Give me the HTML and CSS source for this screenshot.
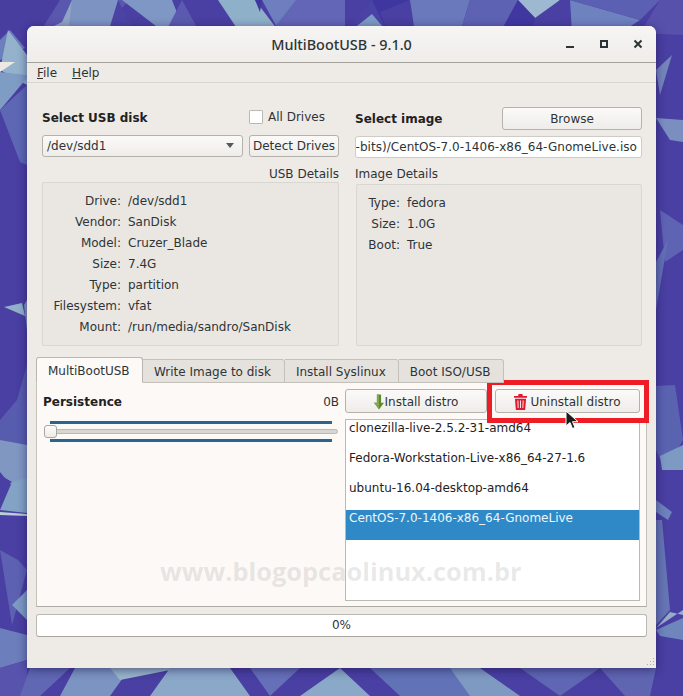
FILE: index.html
```html
<!DOCTYPE html>
<html lang="en">
<head>
<meta charset="utf-8">
<title>MultiBootUSB - 9.1.0</title>
<link rel="stylesheet" href="styles.css">
</head>
<body>
<div class="desktop">
  <svg class="wallpaper" width="683" height="696" viewBox="0 0 683 696" aria-hidden="true">
    <rect width="683" height="696" fill="#4a3fa2"/>
    <polygon points="0,0 60,0 45,30 0,35" fill="#483ea0"/>
    <polygon points="60,0 130,0 100,30 40,32" fill="#5a57ae"/>
    <polygon points="40,33 62,22 72,0 80,33" fill="#8fa3c6"/>
    <polygon points="68,33 72,0 118,0 122,33" fill="#7d94c2"/>
    <polygon points="108,33 118,0 135,33" fill="#4b44a5"/>
    <polygon points="122,0 172,0 185,33 165,33" fill="#7f97c4"/>
    <polygon points="165,33 182,0 200,33" fill="#5b5ab0"/>
    <polygon points="218,0 255,0 280,33 240,33" fill="#8fb0c9"/>
    <polygon points="255,0 262,0 260,12" fill="#3f36a0"/>
    <polygon points="262,0 298,0 280,33" fill="#6e7fbf"/>
    <polygon points="270,33 296,0 345,0 345,33" fill="#6366b6"/>
    <polygon points="345,33 372,0 388,33" fill="#4a43a6"/>
    <polygon points="372,0 410,0 380,12 388,33" fill="#4036a0"/>
    <polygon points="348,33 372,14 388,33" fill="#7d9cc4"/>
    <polygon points="410,0 470,0 460,33 415,33" fill="#6a78bc"/>
    <polygon points="470,0 518,0 500,33 460,33" fill="#5d62b3"/>
    <polygon points="518,0 560,0 535,18" fill="#9db8d0"/>
    <polygon points="518,0 535,18 530,33 500,33" fill="#4037a0"/>
    <polygon points="560,0 570,33 530,33 555,5" fill="#4a40a4"/>
    <polygon points="570,0 640,20 620,33 572,33" fill="#6f82c0"/>
    <polygon points="570,0 660,0 640,20" fill="#5c60b2"/>
    <polygon points="660,0 683,0 683,35 640,33" fill="#5751ac"/>
    <polygon points="0,40 10,30 25,48 0,60" fill="#6b7fbc"/>
    <polygon points="8,30 27,55 27,85 0,70" fill="#94b2cb"/>
    <polygon points="0,62 15,62 0,72" fill="#ece8e2"/>
    <polygon points="0,72 27,75 27,78 0,110" fill="#7e9cc4"/>
    <polygon points="0,110 27,85 27,165 20,162" fill="#5d67b3"/>
    <polygon points="27,365 17,400 0,420 0,440 27,460" fill="#585cae"/>
    <polygon points="0,440 27,445 27,480 10,484 0,472" fill="#8097c2"/>
    <polygon points="0,490 12,482 0,475" fill="#4a3fa2"/>
    <polygon points="0,510 12,482 27,478 27,513" fill="#82a3c4"/>
    <polygon points="0,512 27,514 27,516 0,515" fill="#b7cfd8"/>
    <polygon points="0,550 18,560 27,570 12,625" fill="#5d61b2"/>
    <polygon points="27,590 12,605 27,620" fill="#7d9ac2"/>
    <polygon points="0,628 27,635 27,660 0,668" fill="#6c7ebb"/>
    <polygon points="0,668 27,660 27,696 0,696" fill="#5854ae"/>
    <polygon points="4,307 22,303 25,316" fill="#91b0ca"/>
    <polygon points="27,300 24,305 27,330" fill="#7f99c2"/>
    <polygon points="30,668 70,668 40,696 20,696" fill="#6068b4"/>
    <polygon points="60,696 75,668 130,668 110,696" fill="#7c94c2"/>
    <polygon points="110,668 180,668 120,680" fill="#9ab6cc"/>
    <polygon points="150,696 170,668 230,668 250,696" fill="#8ba8c8"/>
    <polygon points="250,668 300,668 270,696" fill="#6670b8"/>
    <polygon points="300,696 340,668 370,696" fill="#8aa8c7"/>
    <polygon points="370,668 450,668 480,696 400,696" fill="#6272b6"/>
    <polygon points="450,668 480,668 520,696 470,696" fill="#7f9ac2"/>
    <polygon points="520,668 600,668 560,696" fill="#5f66b3"/>
    <polygon points="600,668 656,668 650,696 625,696" fill="#6065b2"/>
    <polygon points="656,70 672,55 660,95" fill="#7586bb"/>
    <polygon points="656,118 683,120 683,142 670,140" fill="#7a8fc0"/>
    <polygon points="660,210 683,225 683,250 665,262" fill="#5f63b3"/>
    <polygon points="656,262 668,240 656,310" fill="#6470b5"/>
    <polygon points="656,386 675,385 683,440 665,470 656,450" fill="#5a63b0"/>
    <polygon points="660,456 683,445 683,470 662,470" fill="#7d9bc2"/>
    <polygon points="656,500 672,512 668,520 656,512" fill="#6e82bc"/>
    <polygon points="656,520 662,520 670,610 656,625" fill="#6675b4"/>
    <polygon points="656,628 683,610 683,615 670,612" fill="#95aec8"/>
    <polygon points="656,630 683,618 683,640 660,636" fill="#6f86bd"/>
  </svg>

  <main class="window">
    <header class="titlebar">
      <h1 class="title">MultiBootUSB - 9.1.0</h1>
      <div class="controls">
        <svg width="14" height="14" viewBox="0 0 14 14"><rect x="3" y="9" width="8" height="2" fill="#2e3436"/></svg>
        <svg width="14" height="14" viewBox="0 0 14 14"><rect x="4" y="4" width="6" height="6" fill="none" stroke="#2e3436" stroke-width="2"/></svg>
        <svg width="14" height="14" viewBox="0 0 14 14"><path d="M3.500 3.500l7 7M10.500 3.500l-7 7" stroke="#2e3436" stroke-width="2" fill="none"/></svg>
      </div>
    </header>
    <nav class="menubar"><span><u>F</u>ile</span><span><u>H</u>elp</span></nav>

    <div class="content">
      <section class="upper">
        <div class="col col-left">
          <div class="row row-usb">
            <strong>Select USB disk</strong>
            <label class="check"><span class="checkbox"></span>All Drives</label>
          </div>
          <div class="row row-combo">
            <div class="combo"><span>/dev/sdd1</span><i class="caret"></i></div>
            <button class="btn btn-detect">Detect Drives</button>
          </div>
          <div class="caption caption-right">USB Details</div>
          <div class="panel panel-usb">
            <dl class="details">
              <dt>Drive:</dt><dd>/dev/sdd1</dd>
              <dt>Vendor:</dt><dd>SanDisk</dd>
              <dt>Model:</dt><dd>Cruzer_Blade</dd>
              <dt>Size:</dt><dd>7.4G</dd>
              <dt>Type:</dt><dd>partition</dd>
              <dt>Filesystem:</dt><dd>vfat</dd>
              <dt>Mount:</dt><dd>/run/media/sandro/SanDisk</dd>
            </dl>
          </div>
        </div>
        <div class="col col-right">
          <div class="row row-image">
            <strong>Select image</strong>
            <button class="btn btn-browse">Browse</button>
          </div>
          <div class="path"><span>(64-bits)/CentOS-7.0-1406-x86_64-GnomeLive.iso</span></div>
          <div class="caption caption-image">Image Details</div>
          <div class="panel panel-image">
            <dl class="details details-image">
              <dt>Type:</dt><dd>fedora</dd>
              <dt>Size:</dt><dd>1.0G</dd>
              <dt>Boot:</dt><dd>True</dd>
            </dl>
          </div>
        </div>
      </section>

      <section class="tabs">
        <div class="tabbar">
          <div class="tab tab-active">MultiBootUSB</div>
          <div class="tab">Write Image to disk</div>
          <div class="tab tab-narrow">Install Syslinux</div>
          <div class="tab tab-narrow">Boot ISO/USB</div>
        </div>
        <div class="pane">
          <div class="pane-left">
            <div class="persist"><strong>Persistence</strong><span>0B</span></div>
            <div class="slider">
              <div class="tick"></div>
              <div class="groove"><span class="thumb"></span></div>
              <div class="tick"></div>
            </div>
          </div>
          <div class="pane-right">
            <div class="actions">
              <button class="btn btn-action btn-install">
                <svg width="10" height="18" viewBox="0 0 12 20"><path d="M3.500 1h5v10H12l-6 8-6-8h3.500z" fill="#5d8a2d"/><path d="M3.500 1h2.500v17L0 11h3.500z" fill="#7fa84a"/></svg>
                <span>Install distro</span>
              </button>
              <button class="btn btn-action btn-uninstall">
                <svg width="13" height="16" viewBox="0 0 14 17"><path d="M5 0h4l.6 2H14v2H0V2h4.400z" fill="#e3172d"/><path d="M1 5h12l-1 12H2zM3.600 7l.4 8h1l-.3-8zm2.900 0v8h1V7zm2.900 0L9 15h1l.4-8z" fill="#e3172d" fill-rule="evenodd"/></svg>
                <span>Uninstall distro</span>
              </button>
            </div>
            <ul class="distros">
              <li>clonezilla-live-2.5.2-31-amd64</li>
              <li>Fedora-Workstation-Live-x86_64-27-1.6</li>
              <li>ubuntu-16.04-desktop-amd64</li>
              <li class="selected">CentOS-7.0-1406-x86_64-GnomeLive</li>
            </ul>
          </div>
        </div>
      </section>

      <div class="progress">0%</div>
    </div>
    <svg class="grip" width="10" height="10" viewBox="0 0 10 10"><path d="M8 1h1v1H8zM5 4h1v1H5zM8 4h1v1H8zM2 7h1v1H2zM5 7h1v1H5zM8 7h1v1H8z" fill="#b0aca6"/></svg>
  </main>

  <div class="watermark">www.blogopcaolinux.com.br</div>
  <div class="highlight"></div>
  <svg class="cursor" width="14" height="21" viewBox="0 0 14 21"><path d="M1 1v15l4-3.500 2.500 6 2.500-1-2.500-5.800H13z" fill="#1c1c1c" stroke="#fff" stroke-width="1"/></svg>
</div>
</body>
</html>
```

FILE: styles.css
```css
* { box-sizing: border-box; }
html, body { margin: 0; padding: 0; }
body { font-family: "DejaVu Sans", sans-serif; font-size: 12px; color: #2e3436; }
.desktop { position: relative; width: 683px; height: 696px; overflow: hidden; background: #4a3fa2; }
.wallpaper { position: absolute; left: 0; top: 0; }

.window {
  position: absolute; left: 27px; top: 26px; width: 629px; height: 642px;
  background: #eeebe7; border-radius: 7px 7px 0 0;
  box-shadow: 0 2px 10px rgba(20, 12, 70, .55);
}
.titlebar {
  height: 37px; display: flex; align-items: center; justify-content: center; position: relative;
  background: linear-gradient(#f6f5f3, #efedea); border-bottom: 1px solid #a5a29c; border-radius: 7px 7px 0 0;
}
.title { margin: 0; font: 500 14.400px "Noto Sans", sans-serif; color: #2e3436; }
.controls { position: absolute; right: 11px; top: 11px; display: flex; gap: 20px; }
.controls svg { display: block; }
.menubar {
  height: 20px; padding: 1px 10px 0; display: flex; gap: 15px; align-items: center;
  border-bottom: 1px solid #d8d5d0; background: #eeebe7; color: #2e3436;
}
.content { padding: 24px 9px 0; }
.upper { display: grid; grid-template-columns: 297px 287px; column-gap: 16px; margin-left: 6px; }
.col { min-width: 0; }
.row { display: flex; align-items: center; }
strong { font-weight: 700; font-size: 12px; color: #1f2223; }
.row-usb { height: 20px; margin-bottom: 7px; justify-content: space-between; }
.row-usb strong { padding-top: 2px; }
.check { display: flex; align-items: center; gap: 5px; width: 90px; color: #2e3436; }
.checkbox { width: 14px; height: 14px; background: #fff; border: 1px solid #bcb8b2; border-radius: 1px; }
.row-combo { gap: 6px; height: 23px; }
.combo {
  width: 201px; height: 22px; padding: 0 8px 0 4px; display: flex; align-items: center; justify-content: space-between;
  background: linear-gradient(#fbfaf9, #efedea); border: 1px solid #b5b1ab; border-radius: 3px;
}
.caret { width: 0; height: 0; border: 4px solid transparent; border-top: 5px solid #55595a; border-bottom: 0; }
.btn {
  font: inherit; color: #2e3436; padding: 0; background: linear-gradient(#fbfaf9, #efedea);
  border: 1px solid #b5b1ab; border-radius: 3px; display: flex; align-items: center; justify-content: center;
}
.btn-detect { width: 90px; height: 22px; }
.caption { height: 16px; line-height: 16px; margin-top: 9px; }
.caption-right { text-align: right; }
.panel { background: #eae7e3; border: 1px solid #dad7d2; border-radius: 2px; }
.panel-usb { height: 164px; }
.panel-image { height: 162px; margin: 2px 0 0 1px; }
.details { margin: 0; padding: 8px 0 0 0; display: grid; grid-template-columns: 78px 1fr; column-gap: 7px; row-gap: 0; }
.details dt, .details dd { margin: 0; height: 21px; line-height: 21px; }
.details dt { text-align: right; }
.details-image { grid-template-columns: 43px 1fr; }
.row-image { height: 23px; justify-content: space-between; margin-bottom: 6px; }
.btn-browse { width: 140px; height: 23px; }
.path {
  height: 22px; background: #fff; border: 1px solid #cfccc7; border-radius: 3px; letter-spacing: .04px;
  overflow: hidden; display: flex; justify-content: flex-end; align-items: center; padding-right: 4px; white-space: nowrap;
}
.caption-image { margin-top: 8px; }

.tabs { margin-top: 11px; }
.tabbar { display: flex; height: 26px; margin-bottom: -1px; position: relative; z-index: 1; }
.tab {
  height: 24px; padding: 4px 13px 0 11px; line-height: 17px; background: #e5e2de;
  border: 1px solid #c3c0ba; border-left: 0; border-radius: 0 3px 0 0; margin-top: 2px; white-space: nowrap;
}
.tab-narrow { padding-right: 12px; }
.tab-active {
  background: #fcf9f6; border: 1px solid #b9b5af; border-bottom-color: #fcf9f6;
  border-radius: 3px 3px 0 0; margin-top: 0; height: 26px; width: 107px; padding: 5px 0 0 11px;
}
.pane {
  height: 225px; padding: 6px; background: #fcf9f6; border: 1px solid #c3c0ba; border-bottom-color: #aeaaa4;
  display: grid; grid-template-columns: 296px 295px; grid-template-rows: 212px; column-gap: 6px;
}
.persist { display: flex; justify-content: space-between; align-items: center; height: 24px; padding-top: 1px; }
.slider { margin-top: 8px; width: 296px; }
.tick { height: 3px; width: 282px; margin-left: 7px; background: #2a6491; }
.groove { position: relative; height: 5px; margin: 5px 1px; background: #d9d6d1; border: 1px solid #bcb8b2; border-radius: 3px; }
.thumb {
  position: absolute; left: -1px; top: -5px; width: 13px; height: 13px;
  background: linear-gradient(#fdfcfb, #eeebe7); border: 1px solid #a9a5a0; border-radius: 3px;
}
.actions { display: flex; gap: 8px; height: 24px; margin-bottom: 6px; }
.btn-action { height: 24px; padding-top: 1px; }
.btn-install { width: 142px; gap: 1px; }
.btn-uninstall { width: 145px; gap: 3px; }
.distros {
  list-style: none; margin: 0; padding: 0; height: 182px; overflow: hidden;
  background: #fff; border: 1px solid #bcb8b2; color: #1f2223;
}
.distros li { height: 30px; padding: 0 3px; line-height: 17px; white-space: nowrap; }
.distros .selected { background: #2f89c6; color: #eef5fa; }
.progress {
  margin-top: 7px; height: 23px; line-height: 21px; text-align: center; background: #fff;
  border: 1px solid #bcb8b2; border-bottom-color: #a8a49e; border-radius: 3px; color: #2e3436;
}
.grip { position: absolute; right: 1px; bottom: 1px; }

.watermark {
  position: absolute; left: 160px; top: 554px; font: 700 25.400px "Open Sans", sans-serif;
  color: rgba(120, 120, 120, .16); white-space: nowrap;
}
.highlight { position: absolute; left: 487px; top: 380px; width: 162px; height: 43px; border: 5px solid #ee1c25; }
.cursor { position: absolute; left: 565px; top: 410px; }
```
